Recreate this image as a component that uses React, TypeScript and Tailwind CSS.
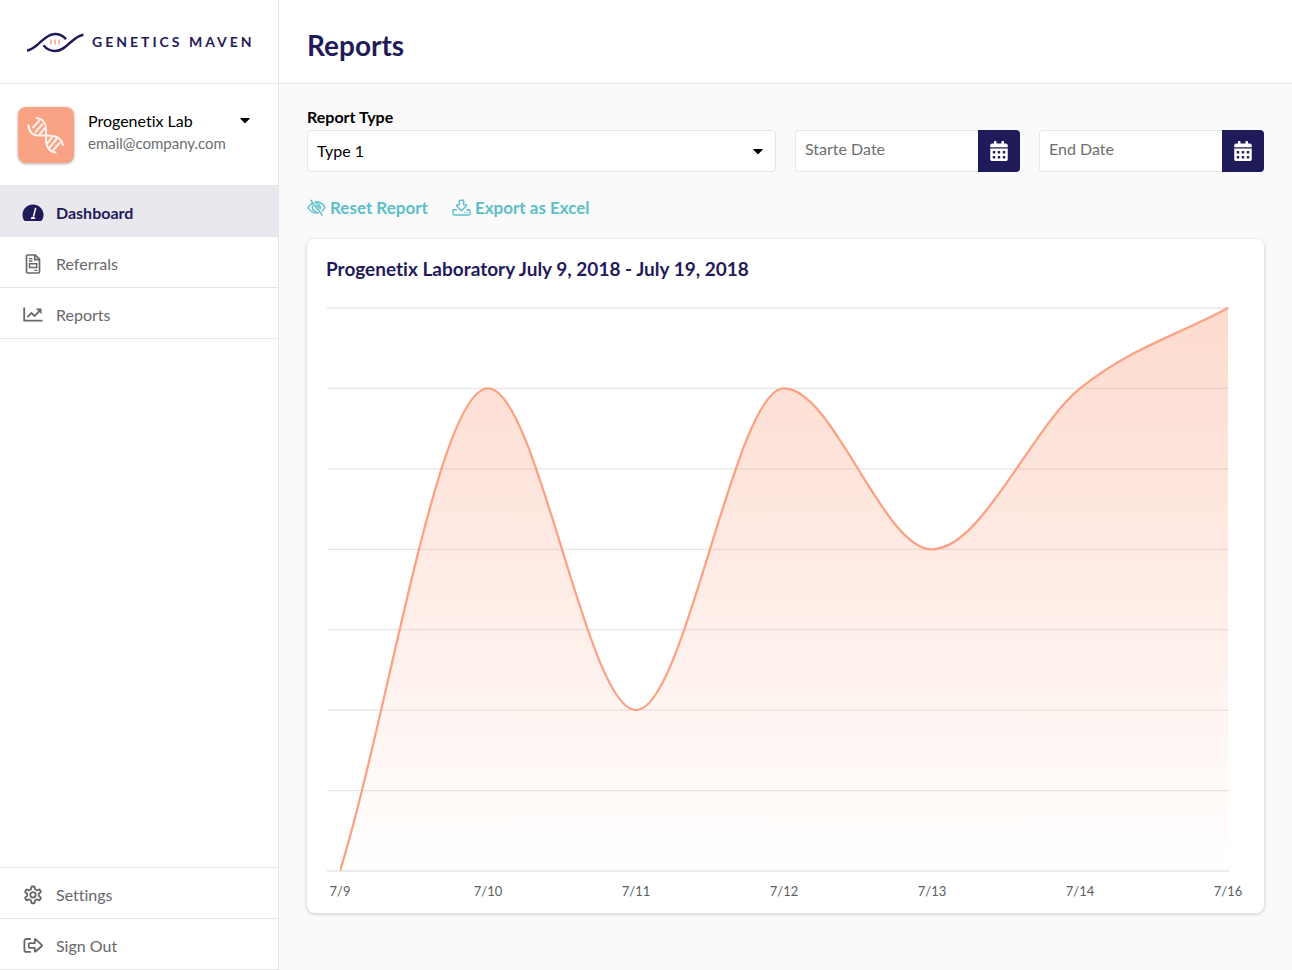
import { ReactNode } from "react";
import { FaCalendarAlt, FaCaretDown } from "react-icons/fa";

type IconProps = { className?: string };

function GaugeIcon({ className }: IconProps) {
    return (
        <svg viewBox="0 0 22 18" className={className} fill="none">
            <path
                d="M11 0.6C5.2 0.6 0.5 5.2 0.5 10.900c0 2 .6 4 1.700 5.600.2.300.5.500.9.500h15.800c.4 0 .7-.2.900-.5 1.100-1.600 1.700-3.600 1.700-5.600C21.500 5.200 16.800.6 11 .6z"
                fill="currentColor"
            />
            <path d="M13.600 4.400L11.600 12" stroke="#fff" strokeWidth="1.500" strokeLinecap="round" />
            <path d="M8.800 15c0-1.400.9-2.300 2.200-2.300s2.300.9 2.300 2.300z" fill="#fff" />
        </svg>
    );
}

function ReferralIcon({ className }: IconProps) {
    return (
        <svg viewBox="0 0 22 20" className={className} fill="none" stroke="currentColor" strokeWidth="1.700">
            <path d="M5.500 1h7.800l4.200 4.200v12.300c0 .8-.6 1.500-1.400 1.500H5.900c-.8 0-1.400-.7-1.400-1.500V2.500C4.500 1.600 4.800 1 5.500 1z" />
            <path d="M12.800 1v4.600h4.700" />
            <path d="M7 4.600h3.400M7 7h3.400M12.400 16.300h3" strokeWidth="1.300" />
            <path d="M7.500 9.800h7.200v3.600H7.500z" strokeWidth="1.500" />
        </svg>
    );
}

function ChartIcon({ className }: IconProps) {
    return (
        <svg viewBox="0 0 22 20" className={className} fill="none" stroke="currentColor" strokeWidth="1.800">
            <path d="M2.200 2.500v13.200h18.300" />
            <path d="M5.300 12.200l4.200-4.200 3 3 5.200-5.200" />
            <path d="M13.700 3.500h5.800v5.800z" fill="currentColor" stroke="none" />
        </svg>
    );
}

function GearIcon({ className }: IconProps) {
    return (
        <svg viewBox="0 0 24 24" className={className} fill="none" stroke="currentColor" strokeWidth="2.200">
            <path
                strokeLinejoin="round"
                d="M9.600 5.100l.5-2.700c.1-.4.4-.6.8-.6h2.200c.4 0 .7.200.8.600l.5 2.700 2.200 1.300 2.600-.9c.4-.1.8 0 1 .3l1.100 1.900c.2.400.1.800-.2 1l-2.100 1.800v2.600l2.100 1.800c.3.300.4.700.2 1l-1.100 1.900c-.2.400-.6.500-1 .4l-2.600-1-2.200 1.300-.5 2.700c-.1.400-.4.700-.8.700h-2.200c-.4 0-.7-.3-.8-.7l-.5-2.700-2.200-1.300-2.600 1c-.4.100-.8 0-1-.4l-1.100-1.900c-.2-.3-.1-.7.200-1L5 13.100v-2.600L2.900 8.700c-.3-.2-.4-.6-.2-1l1.100-1.900c.2-.3.6-.4 1-.3l2.600.9z"
            />
            <circle cx="12" cy="11.800" r="3.300" />
        </svg>
    );
}

function SignOutIcon({ className }: IconProps) {
    return (
        <svg viewBox="0 0 22 20" className={className} fill="none" stroke="currentColor" strokeWidth="1.800">
            <path strokeLinecap="round" d="M8.200 3H4.400c-1.200 0-2 .8-2 2v8.900c0 1.200.8 2 2 2h3.800" />
            <path
                strokeLinejoin="round"
                d="M6.800 8c0-.6.300-.9.900-.9h5.100V3.700c0-.6.500-.7.900-.4l6 5.500c.4.400.4.800 0 1.200l-6 5.500c-.4.400-.9.200-.9-.4v-3.300H7.700c-.6 0-.9-.3-.9-.9z"
            />
        </svg>
    );
}

function EyeOffIcon({ className }: IconProps) {
    return (
        <svg viewBox="0 0 20 18" className={className} fill="none" stroke="currentColor" strokeWidth="1.500">
            <path d="M6.300 3.500C4.200 4.500 2.400 6.200 1 8.500c2 3.700 5.200 5.700 9 5.700.8 0 1.500-.1 2.200-.2" />
            <path d="M7.600 3c.8-.2 1.600-.3 2.400-.3 3.800 0 7 2 9 5.800-.9 1.700-2.100 3.100-3.600 4.100" />
            <path d="M6 6c-1.600 3 .3 6.400 3.900 6.500M9.200 4.500c3.400-.6 6.100 2.800 4.500 6" />
            <path d="M9.500 6l3.700 4.200c1-2-1.200-5-3.700-4.200z" fill="currentColor" stroke="none" />
            <path strokeLinecap="round" d="M4 .8l12 15.600" />
        </svg>
    );
}

function ExportIcon({ className }: IconProps) {
    return (
        <svg viewBox="0 0 20 18" className={className} fill="none" stroke="currentColor" strokeWidth="1.500" strokeLinejoin="round">
            <path d="M7.700 1.700c0-.5.300-.8.800-.8h3c.5 0 .8.300.8.800v4h2.500c.6 0 .8.500.4.900l-4.600 4.700c-.4.400-.8.400-1.200 0L4.800 6.600c-.4-.4-.2-.9.400-.9h2.500z" />
            <path d="M5.200 10.800H2.400c-.8 0-1.400.6-1.400 1.400v2.700c0 .8.600 1.400 1.400 1.400h15.200c.8 0 1.400-.6 1.400-1.400v-2.700c0-.8-.6-1.400-1.400-1.400h-2.800" />
            <path strokeLinecap="round" d="M13.400 13.700h.1M16 13.700h.1" />
        </svg>
    );
}

function DnaIcon({ className }: IconProps) {
    return (
        <svg viewBox="0 0 56 56" className={className} fill="none" stroke="#fff1ec" strokeWidth="2" strokeLinecap="round">
            <path d="M10.500 18.500C11 25 15 28.500 21 28.500h9c8 0 13.500 3 15 9.500" />
            <path d="M18.500 11c6 .5 9.500 5 9.500 11v10c0 8 3 12.500 9.500 13.500" />
            <path d="M21 14l-6 6.500M24.500 17l-7 8M26.500 21.500l-4.500 5.500M34 30.500l-4.500 5.500M38.500 32l-7 8.500M41.500 36l-6.500 7.500" strokeWidth="2" />
        </svg>
    );
}

function Logo() {
    return (
        <a href="#" className="flex items-center gap-2 text-[#1f1b5a]">
            <svg viewBox="0 0 58 22" className="h-[22px] w-[58px] shrink-0" fill="none" stroke="currentColor" strokeWidth="2.400">
                <path d="M1 19.500c3.500-.4 7-3 10.500-5.800C16.500 9.600 21.500 3 29 3c4.800 0 8.500 2 11 5.200" />
                <path d="M17.500 14.300C20 17.500 24 20 29 20c7 0 11.500-5 16-9 4-3.600 8-6.800 12.500-7.300" />
                <path d="M25 8.500v5M29 8.500v5M33 8.500v5" stroke="#faa384" strokeWidth="1.500" />
            </svg>
            <span className="text-[14px] leading-5 font-bold tracking-[3px] whitespace-nowrap">GENETICS MAVEN</span>
        </a>
    );
}

function NavItem({ icon, label, active }: { icon: ReactNode; label: string; active?: boolean }) {
    return (
        <li>
            <a
                href="#"
                className={
                    active
                        ? "flex h-[51px] items-center gap-3 border-b border-[#e6e6e8] bg-[#e9e8ee] px-[22px] pt-1 font-bold text-[#1f1b5a]"
                        : "flex h-[51px] items-center gap-3 border-b border-[#e6e6e6] px-[22px] pt-1 text-[#67686b]"
                }
            >
                {icon}
                {label}
            </a>
        </li>
    );
}

function DateField({ placeholder }: { placeholder: string }) {
    return (
        <div className="flex h-[42px]">
            <input
                type="text"
                aria-label={placeholder}
                placeholder={placeholder}
                className="min-w-0 flex-1 rounded-l-[4px] border border-r-0 border-[#e6e6e6] bg-white px-[9px] pb-1 placeholder:text-[#6d6e71]"
            />
            <button
                type="button"
                aria-label={"Pick " + placeholder}
                className="flex w-[42px] items-center justify-center rounded-r-[4px] bg-[#1f1b5a] text-white"
            >
                <FaCalendarAlt className="h-5 w-[18px]" />
            </button>
        </div>
    );
}

const points = [
    { label: "7/9", value: 0 },
    { label: "7/10", value: 6 },
    { label: "7/11", value: 2 },
    { label: "7/12", value: 6 },
    { label: "7/13", value: 4 },
    { label: "7/14", value: 6 },
    { label: "7/16", value: 7 },
];

const STEP_X = 148;
const TOP = 17;
const BOTTOM = 580;
const STEP_Y = (BOTTOM - TOP) / 7;

// monotone cubic, so the curve never overshoots a data point
function buildLine() {
    const xy = points.map((p, i) => ({ x: 14 + i * STEP_X, y: BOTTOM - p.value * STEP_Y }));
    const slopes = xy.slice(1).map((p, i) => (p.y - xy[i].y) / STEP_X);
    const tangents = xy.map((_, i) => {
        if (i === 0) return slopes[0];
        if (i === xy.length - 1) return slopes[i - 1];
        return slopes[i - 1] * slopes[i] <= 0 ? 0 : (slopes[i - 1] + slopes[i]) / 2;
    });
    const third = STEP_X / 3;
    let d = `M${xy[0].x} ${xy[0].y}`;
    for (let i = 1; i < xy.length; i++) {
        const a = xy[i - 1];
        const b = xy[i];
        d += ` C${a.x + third} ${a.y + tangents[i - 1] * third} ${b.x - third} ${b.y - tangents[i] * third} ${b.x} ${b.y}`;
    }
    return d;
}

function ReportChart() {
    const line = buildLine();
    const lastX = 14 + (points.length - 1) * STEP_X;

    return (
        <svg viewBox="0 0 919 611" className="mt-[10px] block h-auto w-full">
            <defs>
                <linearGradient id="fill" x1="0" y1="0" x2="0" y2="1">
                    <stop offset="0" stopColor="#faa384" stopOpacity="0.400" />
                    <stop offset="1" stopColor="#faa384" stopOpacity="0" />
                </linearGradient>
                <clipPath id="plot">
                    <rect x="14" y={TOP - 1} width={lastX - 14} height={BOTTOM - TOP + 1} />
                </clipPath>
            </defs>
            {[0, 1, 2, 3, 4, 5, 6, 7].map((i) => (
                <path key={i} d={`M1 ${TOP + i * STEP_Y}H903`} stroke="#e6e6e6" strokeWidth="1.300" />
            ))}
            <path d={`${line} L${lastX} ${BOTTOM} L14 ${BOTTOM} Z`} fill="url(#fill)" />
            <path d={line} fill="none" stroke="#faa384" strokeWidth="2.300" clipPath="url(#plot)" />
            {points.map((p, i) => (
                <text key={p.label} x={14 + i * STEP_X} y="605" textAnchor="middle" fontSize="13" fill="#5d5e61">
                    {p.label}
                </text>
            ))}
        </svg>
    );
}

export default function App() {
    return (
        <div className="flex min-h-screen bg-[#fafafa] font-[Lato,sans-serif] text-[16px] leading-6 text-black [font-variant-ligatures:none]">
            <aside className="flex w-[279px] shrink-0 flex-col border-r border-[#e6e6e6] bg-white">
                <div className="flex h-[84px] items-center border-b border-[#e6e6e6] px-[26px]">
                    <Logo />
                </div>
                <button type="button" className="flex h-[101px] items-center gap-[14px] pr-7 pl-[18px] text-left">
                    <span className="size-14 shrink-0 rounded-[8px] bg-[#faa384] shadow-[0_1px_3px_rgba(0,0,0,0.3)]">
                        <DnaIcon className="size-14" />
                    </span>
                    <span className="flex-1 self-start pt-[25px]">
                        <span className="block leading-6">Progenetix Lab</span>
                        <span className="block text-[15px] leading-5 text-[#6d6e71]">email@company.com</span>
                    </span>
                    <FaCaretDown className="mt-7 h-4 w-[10px] self-start" />
                </button>
                <nav className="flex flex-1 flex-col justify-between">
                    <ul className="border-t border-[#e6e6e8]">
                        <NavItem active icon={<GaugeIcon className="h-[18px] w-[22px]" />} label="Dashboard" />
                        <NavItem icon={<ReferralIcon className="h-5 w-[22px]" />} label="Referrals" />
                        <NavItem icon={<ChartIcon className="h-5 w-[22px]" />} label="Reports" />
                    </ul>
                    <ul className="border-t border-[#e6e6e6]">
                        <NavItem icon={<GearIcon className="h-5 w-[22px]" />} label="Settings" />
                        <NavItem icon={<SignOutIcon className="h-5 w-[22px]" />} label="Sign Out" />
                    </ul>
                </nav>
            </aside>

            <div className="min-w-0 flex-1">
                <header className="flex h-[84px] items-center border-b border-[#e6e6e6] bg-white px-7 pt-[6px]">
                    <h1 className="text-[28px] leading-9 font-bold text-[#1f1b5a]">Reports</h1>
                </header>
                <main className="px-7 pt-[22px] pb-7">
                    <form className="grid grid-cols-4 items-end gap-[19px]">
                        <div className="col-span-2">
                            <label htmlFor="report-type" className="block pb-[2px] leading-[22px] font-bold">
                                Report Type
                            </label>
                            <div className="relative">
                                <select
                                    id="report-type"
                                    className="block h-[42px] w-full appearance-none rounded-[4px] border border-[#e6e6e6] bg-white px-[9px]"
                                >
                                    <option>Type 1</option>
                                </select>
                                <FaCaretDown className="pointer-events-none absolute top-[13px] right-[13px] h-4 w-[10px]" />
                            </div>
                        </div>
                        <DateField placeholder="Starte Date" />
                        <DateField placeholder="End Date" />
                    </form>

                    <div className="mt-6 flex gap-6 text-[17px] font-bold text-[#5cbfc9]">
                        <button type="button" className="flex items-center gap-1">
                            <EyeOffIcon className="h-[18px] w-[19px]" />
                            Reset Report
                        </button>
                        <button type="button" className="flex items-center gap-1">
                            <ExportIcon className="h-[18px] w-[19px]" />
                            Export as Excel
                        </button>
                    </div>

                    <section className="mt-[19px] rounded-[8px] bg-white px-[19px] pt-[18px] pb-[11px] shadow-[0_1px_4px_rgba(0,0,0,0.2)]">
                        <h2 className="text-[19px] leading-6 font-bold text-[#1f1b5a]">
                            Progenetix Laboratory July 9, 2018 - July 19, 2018
                        </h2>
                        <ReportChart />
                    </section>
                </main>
            </div>
        </div>
    );
}
